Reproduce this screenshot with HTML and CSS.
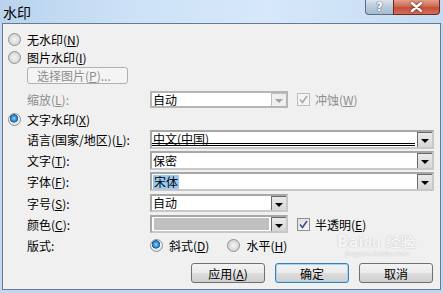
FILE: index.html
```html
<!DOCTYPE html>
<html lang="zh">
<head>
<meta charset="utf-8">
<title>水印</title>
<link rel="stylesheet" href="styles.css">
</head>
<body>
<div class="window">
  <div class="titlebar">
    <span class="title">水印</span>
    <div class="caption-buttons">
      <div class="cap cap-help">?</div>
      <div class="cap cap-close">
        <svg width="13" height="10" viewBox="0 0 13 10"><path d="M2 1 L11 9 M11 1 L2 9" stroke="#fff" stroke-width="2.4" stroke-linecap="round"/></svg>
      </div>
    </div>
  </div>
  <div class="panel">
    <div class="row r1"><span class="radio"></span><span>无水印(<u>N</u>)</span></div>
    <div class="row r2"><span class="radio"></span><span>图片水印(<u>I</u>)</span></div>
    <div class="row r3 indent"><div class="btn btn-disabled btn-pick">选择图片(<u>P</u>)...</div></div>
    <div class="row r4 indent">
      <span class="label disabled">缩放(<u>L</u>):</span>
      <div class="combo combo-small combo-disabled"><span class="val">自动</span><span class="drop"><i class="tri"></i></span></div>
      <span class="check check-disabled"><svg width="11" height="11" viewBox="0 0 11 11"><path d="M2 5.5 L4.5 8.5 L9 2" fill="none" stroke="#a8a8a8" stroke-width="1.6"/></svg></span>
      <span class="disabled chk-label">冲蚀(<u>W</u>)</span>
    </div>
    <div class="row r5"><span class="radio radio-on"></span><span>文字水印(<u>X</u>)</span></div>
    <div class="row r6 indent">
      <span class="label">语言(国家/地区)(<u>L</u>):</span>
      <div class="combo combo-wide"><span class="val val-focus">中文(中国)</span><span class="drop"><i class="tri"></i></span></div>
    </div>
    <div class="row r7 indent">
      <span class="label">文字(<u>T</u>):</span>
      <div class="combo combo-wide"><span class="val">保密</span><span class="drop"><i class="tri"></i></span></div>
    </div>
    <div class="row r8 indent">
      <span class="label">字体(<u>F</u>):</span>
      <div class="combo combo-wide"><span class="val"><span class="sel">宋体</span></span><span class="drop"><i class="tri"></i></span></div>
    </div>
    <div class="row r9 indent">
      <span class="label">字号(<u>S</u>):</span>
      <div class="combo combo-small"><span class="val">自动</span><span class="drop"><i class="tri"></i></span></div>
    </div>
    <div class="row r10 indent">
      <span class="label">颜色(<u>C</u>):</span>
      <div class="combo combo-small"><span class="val"><span class="swatch"></span></span><span class="drop"><i class="tri"></i></span></div>
      <span class="check"><svg width="11" height="11" viewBox="0 0 11 11"><path d="M2 5.5 L4.5 8.5 L9 2" fill="none" stroke="#3d4f8f" stroke-width="1.6"/></svg></span>
      <span class="chk-label">半透明(<u>E</u>)</span>
    </div>
    <div class="row r11 indent">
      <span class="label">版式:</span>
      <span class="radio radio-on"></span><span class="opt">斜式(<u>D</u>)</span>
      <span class="radio radio-h"></span><span>水平(<u>H</u>)</span>
    </div>
    <div class="row r12 buttons">
      <div class="btn">应用(<u>A</u>)</div>
      <div class="btn btn-default">确定</div>
      <div class="btn">取消</div>
    </div>
    <div class="watermark"><span class="wm-big">Bai<span class="wm-du">du</span> 经验</span><span class="wm-small">jingyan.baidu.com</span></div>
  </div>
</div>
</body>
</html>
```

FILE: styles.css
```css
* { box-sizing: border-box; }
html, body { margin: 0; padding: 0; }
body {
  width: 443px;
  height: 293px;
  overflow: hidden;
  background: #c0d7ef;
  font-family: "Noto Sans CJK SC", "Noto Sans", sans-serif;
  font-size: 12px;
  color: #000;
}
u { text-decoration: underline; text-underline-offset: 1px; }
.window { display: flex; flex-direction: column; height: 293px; }

.titlebar {
  height: 23px;
  flex: none;
  display: flex;
  align-items: flex-start;
  background: linear-gradient(90deg, #b9d3ee 0%, #cde2f7 30%, #d6e8fa 60%, #c4dbf3 100%);
}
.title {
  font-size: 14px;
  line-height: 24px;
  padding-left: 3px;
  color: #000;
}
.caption-buttons { margin-left: auto; margin-right: 3px; display: flex; }
.cap {
  height: 15px;
  display: flex;
  align-items: center;
  justify-content: center;
  border: 1px solid #5c6d80;
  border-top: none;
}
.cap-help {
  width: 28px;
  border-radius: 0 0 0 4px;
  border-right: none;
  background: linear-gradient(#d9e4ef, #b8c9da 50%, #a7bbd0);
  color: #fff;
  font-family: "DejaVu Sans", sans-serif;
  font-weight: bold;
  font-size: 12px;
  text-shadow: 0 0 1px #384a60, 0 0 1px #384a60;
}
.cap-close {
  width: 47px;
  border-radius: 0 0 4px 0;
  border-color: #6b2a20;
  background: linear-gradient(#e3a08e, #cf6a55 45%, #c44f37 55%, #d2705a);
}
.cap-close svg { filter: drop-shadow(0 0 1px #5a1a10); }

.panel {
  flex: 1;
  margin: 0 2px 3px 2px;
  border: 1px solid #6a7a8e;
  background: #f0f0f0;
  padding: 0 7px 0 5px;
  display: flex;
  flex-direction: column;
  position: relative;
}
.row { display: flex; align-items: center; flex: none; }
.indent { padding-left: 19px; }
.r1 { margin-top: 7px; height: 17px; }
.r2 { margin-top: 1px; height: 17px; }
.r3 { margin-top: 1px; height: 17px; }
.r4 { margin-top: 7px; height: 17px; }
.r5 { margin-top: 3px; height: 17px; }
.r6 { margin-top: 2px; height: 19px; }
.r7 { margin-top: 2px; height: 19px; }
.r8 { margin-top: 2px; height: 19px; }
.r9 { margin-top: 3px; height: 18px; }
.r10 { margin-top: 3px; height: 18px; }
.r11 { margin-top: 4px; height: 17px; }
.r12 { margin-top: 9px; height: 20px; }

.label { width: 123px; flex: none; }
.disabled { color: #8d8d8d; }

.radio {
  width: 13px;
  height: 13px;
  border-radius: 50%;
  border: 1px solid #8e8f8f;
  background: radial-gradient(circle at 50% 50%, #f4f4f4 0%, #dcdcdc 55%, #c9c9c9 100%);
  margin-right: 6px;
  flex: none;
}
.radio-on {
  background: radial-gradient(circle at 45% 40%, #9fd4f8 0%, #2c89cf 30%, #1c5f9e 44%, #f2f2f2 50%, #dddddd 80%);
}
.opt { margin-right: 18px; }

.check {
  width: 13px;
  height: 13px;
  border: 1px solid #8f8f8f;
  background: linear-gradient(135deg, #dedede, #f8f8f8);
  display: flex;
  align-items: center;
  justify-content: center;
  margin-left: 9px;
  margin-right: 5px;
  flex: none;
}
.check-disabled { border-color: #bcbcbc; background: #f4f4f4; }
.chk-label { white-space: nowrap; }

.combo {
  height: 100%;
  display: flex;
  align-items: stretch;
  border: 2px solid #a7a7a7;
  border-right-color: #c8c8c8;
  border-bottom-color: #c8c8c8;
  background: #fff;
  flex: none;
}
.combo-wide { width: 284px; }
.combo-small { width: 138px; }
.combo-disabled { border-color: #b5b5b5; }
.val {
  flex: 1;
  display: flex;
  align-items: center;
  padding-left: 1px;
  line-height: 14px;
}
.val-focus {
  margin: 0 2px 1px 0;
  border-bottom: 3px double #000;
  padding-top: 2px;
}
.sel { background: #99c9ef; padding: 0 1px; }
.swatch { display: block; width: 115px; height: 12px; background: #c0c0c0; margin-left: 1px; }
.drop {
  width: 15px;
  flex: none;
  background: linear-gradient(#eaeaea, #d6d6d6);
  border-top: 1px solid #6a6a6a;
  border-left: 1px solid #6a6a6a;
  display: flex;
  align-items: center;
  justify-content: center;
}
.combo-disabled .drop { border-color: #bdbdbd; background: #efefef; }
.tri {
  width: 0;
  height: 0;
  border-left: 4px solid transparent;
  border-right: 4px solid transparent;
  border-top: 4px solid #000;
  margin-top: 2px;
}
.combo-disabled .tri { border-top-color: #a0a0a0; }

.btn {
  width: 74px;
  height: 20px;
  border: 1px solid #707070;
  border-radius: 3px;
  background: linear-gradient(#f2f2f2 0%, #ebebeb 50%, #dddddd 51%, #cfcfcf 100%);
  display: flex;
  align-items: center;
  justify-content: center;
  flex: none;
}
.btn-default { border-color: #3c7fb1; box-shadow: inset 0 0 0 1px #9fd6f5; }
.btn-disabled {
  width: 101px;
  height: 17px;
  border-color: #adb2b5;
  background: #f4f4f4;
  color: #8d8d8d;
  justify-content: flex-start;
  padding-left: 9px;
}
.buttons { justify-content: flex-end; gap: 10px; }

.watermark {
  position: absolute;
  left: 334px;
  top: 211px;
  display: flex;
  flex-direction: column;
  align-items: flex-start;
  color: rgba(255, 255, 255, 0.9);
  text-shadow: 0 0 1px rgba(140, 140, 140, 0.7);
  pointer-events: none;
  line-height: 1;
}
.wm-big { font-family: "DejaVu Sans", sans-serif; font-weight: bold; font-size: 15px; }
.wm-du { font-size: 12px; }
.wm-small { font-family: "DejaVu Sans", sans-serif; font-size: 7px; margin-left: 8px; margin-top: 1px; }
```
